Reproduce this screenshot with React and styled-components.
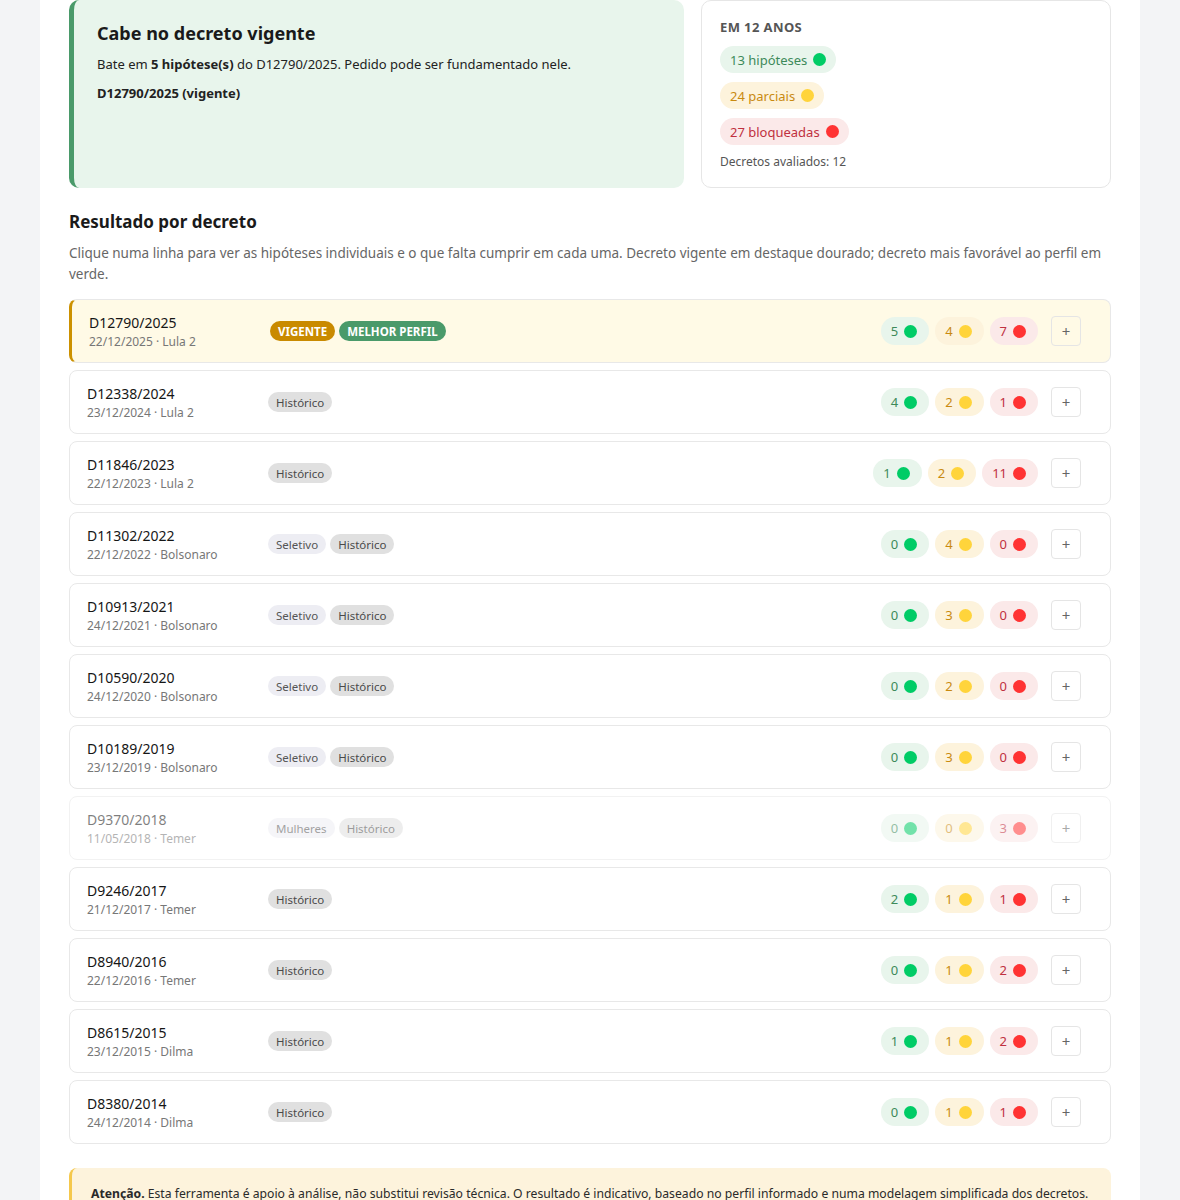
import styled, { createGlobalStyle, css } from "styled-components";

const GlobalStyle = createGlobalStyle`
  body {
    margin: 0;
    background: #f3f4f6;
    font-family: "Noto Sans", "Open Sans", Arial, sans-serif;
    color: #1f1f1f;
  }
  * { box-sizing: border-box; }
`

const tones = {
  green: { bg: "#e8f5ec", fg: "#3d8a5a", dot: "#00cc66" },
  yellow: { bg: "#fdf3dc", fg: "#c98a10", dot: "#ffd43b" },
  red: { bg: "#fbe9e9", fg: "#c03040", dot: "#ff3333" },
}

const Page = styled.div`
  width: 1100px;
  margin: 0 auto;
  background: #fff;
  padding: 0 29px 40px;
  min-height: 1200px;
`
const TopGrid = styled.div`
  display: grid;
  grid-template-columns: 3fr 2fr;
  gap: 17px;
`
const VerdictCard = styled.div`
  background: #e8f5ec;
  border-left: 5px solid #4a9a6a;
  border-radius: 10px;
  padding: 21px 23px;
`
const VerdictTitle = styled.h2`
  margin: 0 0 10px;
  font-size: 18px;
  font-weight: 700;
  color: #1a1a1a;
`
const VerdictText = styled.p`
  margin: 0 0 10px;
  font-size: 13px;
  line-height: 19px;
  color: #222;
`
const SummaryCard = styled.div`
  border: 1px solid #e6e6e6;
  border-radius: 10px;
  padding: 17px 18px 17px;
  display: flex;
  flex-direction: column;
  align-items: flex-start;
  gap: 9px;
`
const SummaryLabel = styled.div`
  font-size: 13px;
  font-weight: 700;
  color: #555;
  letter-spacing: 0.4px;
  line-height: 18px;
  margin-bottom: 1px;
`
const SummaryPill = styled.span`
  display: inline-flex;
  align-items: center;
  gap: 6px;
  height: 27px;
  padding: 0 10px;
  border-radius: 14px;
  font-size: 13px;
  background: ${p => tones[p.$tone].bg};
  color: ${p => tones[p.$tone].fg};
`
const Dot = styled.span`
  width: 13px;
  height: 13px;
  border-radius: 50%;
  background: ${p => tones[p.$tone].dot};
`
const SummaryNote = styled.div`
  font-size: 12px;
  color: #555;
  line-height: 16px;
`
const SectionTitle = styled.h3`
  margin: 22px 0 10px;
  font-size: 17px;
  font-weight: 700;
  color: #1a1a1a;
`
const SectionDesc = styled.p`
  margin: 0 0 14px;
  font-size: 13.5px;
  line-height: 21px;
  color: #666;
`
const RowList = styled.div`
  display: flex;
  flex-direction: column;
  gap: 7px;
`
const Row = styled.div`
  display: flex;
  align-items: center;
  height: 64px;
  padding: 0 29px 0 17px;
  border: 1px solid #e8e8e8;
  border-radius: 8px;
  background: #fff;
  cursor: pointer;
  ${p => p.$current && css`
    background: #fffae6;
    border-left: 3px solid #cc9100;
  `}
  ${p => p.$muted && css`
    opacity: 0.55;
  `}
`
const DecreeInfo = styled.div`
  width: 181px;
  display: flex;
  flex-direction: column;
  gap: 2px;
`
const DecreeCode = styled.div`
  font-size: 14px;
  font-weight: 400;
  color: #161616;
  line-height: 19px;
`
const DecreeMeta = styled.div`
  font-size: 12px;
  color: #777;
  line-height: 16px;
`
const Tags = styled.div`
  flex: 1;
  display: flex;
  gap: 4px;
`
const tagStyles = {
  historico: css`background: #e0e0e0; color: #4a4a4a;`,
  seletivo: css`background: #ededf3; color: #555;`,
  mulheres: css`background: #ededf3; color: #555;`,
  vigente: css`background: #c98a00; color: #fff; font-weight: 700;`,
  melhor: css`background: #4a9a6a; color: #fff; font-weight: 700;`,
}
const Tag = styled.span`
  display: inline-flex;
  align-items: center;
  height: 20px;
  padding: 0 8px;
  border-radius: 10px;
  font-size: 11.5px;
  ${p => tagStyles[p.$kind]}
`
const Counts = styled.div`
  display: flex;
  align-items: center;
  gap: 6px;
`
const CountPill = styled.span`
  display: inline-flex;
  align-items: center;
  gap: 6px;
  height: 28px;
  padding: 0 12px 0 10px;
  border-radius: 14px;
  font-size: 13px;
  background: ${p => tones[p.$tone].bg};
  color: ${p => tones[p.$tone].fg};
`
const ExpandButton = styled.button`
  margin-left: 7px;
  width: 30px;
  height: 30px;
  border: 1px solid #e5e5e5;
  border-radius: 4px;
  background: transparent;
  color: #666;
  font-size: 15px;
  font-family: inherit;
  line-height: 1;
  cursor: pointer;
`
const Notice = styled.div`
  margin-top: 24px;
  padding: 16px 20px 16px 19px;
  background: #fdf3dc;
  border-left: 3px solid #f5c84c;
  border-radius: 8px;
  font-size: 12.2px;
  line-height: 19px;
  color: #2a2a2a;
  white-space: nowrap;
`

const tagLabels = {
  historico: "Histórico",
  seletivo: "Seletivo",
  mulheres: "Mulheres",
  vigente: "VIGENTE",
  melhor: "MELHOR PERFIL",
}

const decrees = [
  { code: "D12790/2025", meta: "22/12/2025 · Lula 2", tags: ["vigente", "melhor"], c: [5, 4, 7], current: true },
  { code: "D12338/2024", meta: "23/12/2024 · Lula 2", tags: ["historico"], c: [4, 2, 1] },
  { code: "D11846/2023", meta: "22/12/2023 · Lula 2", tags: ["historico"], c: [1, 2, 11] },
  { code: "D11302/2022", meta: "22/12/2022 · Bolsonaro", tags: ["seletivo", "historico"], c: [0, 4, 0] },
  { code: "D10913/2021", meta: "24/12/2021 · Bolsonaro", tags: ["seletivo", "historico"], c: [0, 3, 0] },
  { code: "D10590/2020", meta: "24/12/2020 · Bolsonaro", tags: ["seletivo", "historico"], c: [0, 2, 0] },
  { code: "D10189/2019", meta: "23/12/2019 · Bolsonaro", tags: ["seletivo", "historico"], c: [0, 3, 0] },
  { code: "D9370/2018", meta: "11/05/2018 · Temer", tags: ["mulheres", "historico"], c: [0, 0, 3], muted: true },
  { code: "D9246/2017", meta: "21/12/2017 · Temer", tags: ["historico"], c: [2, 1, 1] },
  { code: "D8940/2016", meta: "22/12/2016 · Temer", tags: ["historico"], c: [0, 1, 2] },
  { code: "D8615/2015", meta: "23/12/2015 · Dilma", tags: ["historico"], c: [1, 1, 2] },
  { code: "D8380/2014", meta: "24/12/2014 · Dilma", tags: ["historico"], c: [0, 1, 1] },
]

const toneOrder = ["green", "yellow", "red"]

export default function App() {
  return (
    <>
      <GlobalStyle />
      <Page>
        <TopGrid>
          <VerdictCard>
            <VerdictTitle>Cabe no decreto vigente</VerdictTitle>
            <VerdictText>
              Bate em <b>5 hipótese(s)</b> do D12790/2025. Pedido pode ser fundamentado nele.
            </VerdictText>
            <VerdictText><b>D12790/2025 (vigente)</b></VerdictText>
          </VerdictCard>
          <SummaryCard>
            <SummaryLabel>EM 12 ANOS</SummaryLabel>
            <SummaryPill $tone="green">13 hipóteses <Dot $tone="green" /></SummaryPill>
            <SummaryPill $tone="yellow">24 parciais <Dot $tone="yellow" /></SummaryPill>
            <SummaryPill $tone="red">27 bloqueadas <Dot $tone="red" /></SummaryPill>
            <SummaryNote>Decretos avaliados: 12</SummaryNote>
          </SummaryCard>
        </TopGrid>

        <SectionTitle>Resultado por decreto</SectionTitle>
        <SectionDesc>
          Clique numa linha para ver as hipóteses individuais e o que falta cumprir em cada uma. Decreto vigente em destaque dourado; decreto mais favorável ao perfil em verde.
        </SectionDesc>

        <RowList>
          {decrees.map(d => (
            <Row key={d.code} $current={d.current} $muted={d.muted}>
              <DecreeInfo>
                <DecreeCode>{d.code}</DecreeCode>
                <DecreeMeta>{d.meta}</DecreeMeta>
              </DecreeInfo>
              <Tags>
                {d.tags.map(t => <Tag key={t} $kind={t}>{tagLabels[t]}</Tag>)}
              </Tags>
              <Counts>
                {d.c.map((n, i) => (
                  <CountPill key={i} $tone={toneOrder[i]}>
                    {n} <Dot $tone={toneOrder[i]} />
                  </CountPill>
                ))}
                <ExpandButton>+</ExpandButton>
              </Counts>
            </Row>
          ))}
        </RowList>

        <Notice>
          <b>Atenção.</b> Esta ferramenta é apoio à análise, não substitui revisão técnica. O resultado é indicativo, baseado no perfil informado e numa modelagem simplificada dos decretos.
        </Notice>
      </Page>
    </>
  )
}
